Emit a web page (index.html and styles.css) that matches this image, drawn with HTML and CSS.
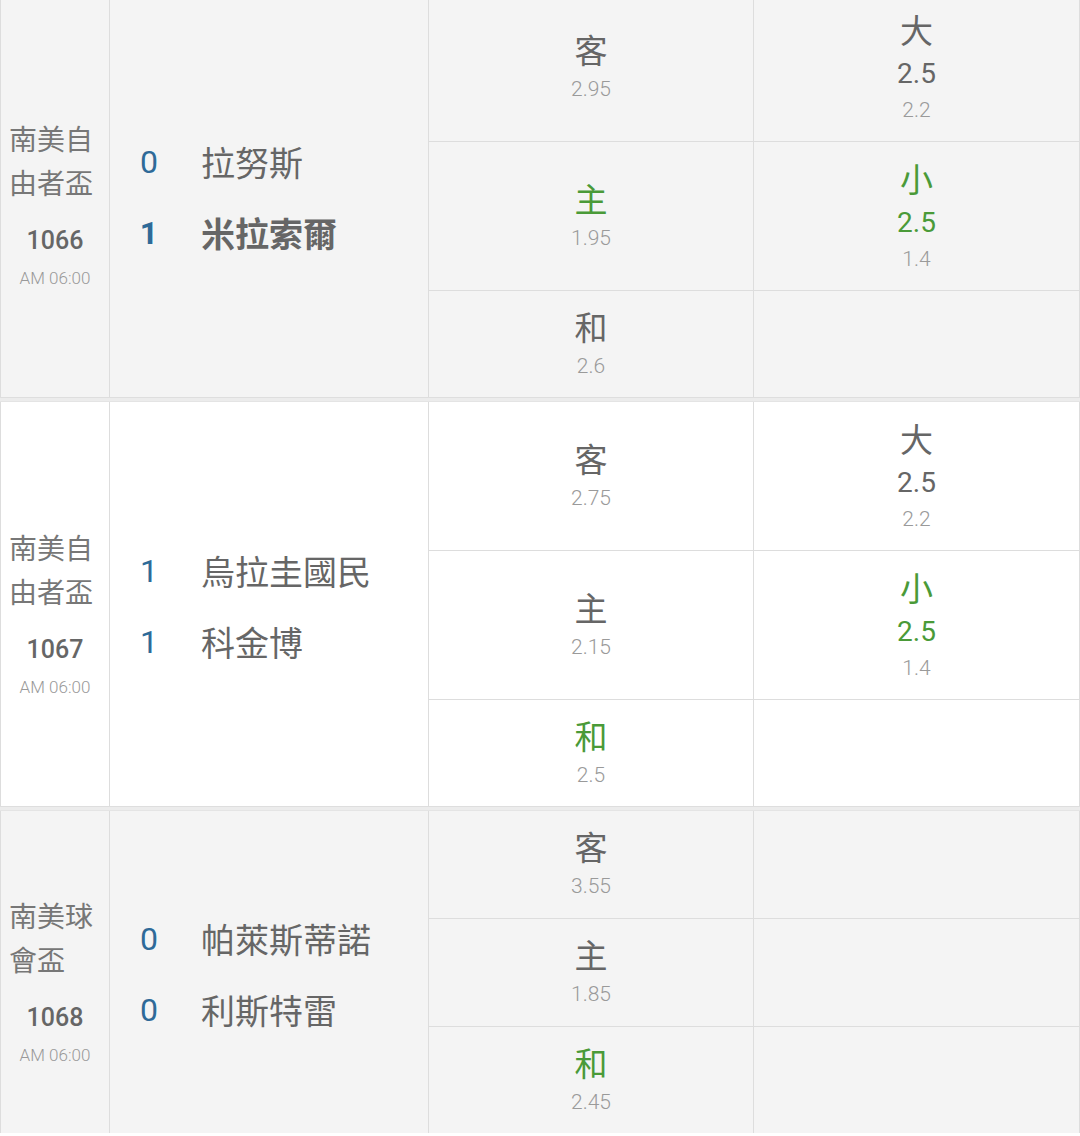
FILE: index.html
```html
<!DOCTYPE html>
<html lang="zh-Hant">
<head>
<meta charset="utf-8">
<title>賽果</title>
<link rel="stylesheet" href="styles.css">
</head>
<body>
<div class="list">
  <div class="match gray">
    <div class="league"><div class="lname">南美自由者盃</div><div class="num">1066</div><div class="time">AM 06:00</div></div>
    <div class="teams">
      <div class="team"><span class="score">0</span><span class="tname">拉努斯</span></div>
      <div class="team win"><span class="score">1</span><span class="tname">米拉索爾</span></div>
    </div>
    <div class="odd"><div class="lbl">客</div><div class="val">2.95</div></div>
    <div class="odd ou"><div class="lbl">大</div><div class="line">2.5</div><div class="val small">2.2</div></div>
    <div class="odd"><div class="lbl green">主</div><div class="val">1.95</div></div>
    <div class="odd ou"><div class="lbl green">小</div><div class="line green">2.5</div><div class="val small">1.4</div></div>
    <div class="odd last"><div class="lbl">和</div><div class="val">2.6</div></div>
    <div class="odd last empty"></div>
  </div>
  <div class="sep"></div>
  <div class="match white">
    <div class="league"><div class="lname">南美自由者盃</div><div class="num">1067</div><div class="time">AM 06:00</div></div>
    <div class="teams">
      <div class="team"><span class="score">1</span><span class="tname">烏拉圭國民</span></div>
      <div class="team"><span class="score">1</span><span class="tname">科金博</span></div>
    </div>
    <div class="odd"><div class="lbl">客</div><div class="val">2.75</div></div>
    <div class="odd ou"><div class="lbl">大</div><div class="line">2.5</div><div class="val small">2.2</div></div>
    <div class="odd"><div class="lbl">主</div><div class="val">2.15</div></div>
    <div class="odd ou"><div class="lbl green">小</div><div class="line green">2.5</div><div class="val small">1.4</div></div>
    <div class="odd last"><div class="lbl green">和</div><div class="val">2.5</div></div>
    <div class="odd last empty"></div>
  </div>
  <div class="sep"></div>
  <div class="match gray">
    <div class="league"><div class="lname">南美球會盃</div><div class="num">1068</div><div class="time">AM 06:00</div></div>
    <div class="teams">
      <div class="team"><span class="score">0</span><span class="tname">帕萊斯蒂諾</span></div>
      <div class="team"><span class="score">0</span><span class="tname">利斯特雷</span></div>
    </div>
    <div class="odd"><div class="lbl">客</div><div class="val">3.55</div></div>
    <div class="odd empty"></div>
    <div class="odd"><div class="lbl">主</div><div class="val">1.85</div></div>
    <div class="odd empty"></div>
    <div class="odd last"><div class="lbl green">和</div><div class="val">2.45</div></div>
    <div class="odd last empty"></div>
  </div>
</div>
</body>
</html>
```
FILE: styles.css
```css
* { box-sizing: border-box; }
html, body { margin: 0; padding: 0; }
body {
  background: #ffffff;
  font-family: Roboto, "Liberation Sans", "Noto Sans CJK TC", sans-serif;
  color: #666666;
  overflow: hidden;
}
.list { margin-top: -7px; }
.match {
  display: grid;
  grid-template-columns: 110px 319px 325px 1fr;
}
.match.gray { background: #f4f4f4; }
.match.white { background: #ffffff; }
.sep {
  height: 5px;
  background: #ececec;
  border-top: 1px solid #dedede;
  border-bottom: 1px solid #e4e4e4;
}
.league {
  grid-row: 1 / 4;
  grid-column: 1;
  border-left: 1px solid #dddddd;
  border-right: 1px solid #dddddd;
  display: flex;
  flex-direction: column;
  justify-content: center;
  padding: 20px 12px 0 8px;
}
.lname {
  font-size: 28px;
  line-height: 44px;
  color: #777777;
  font-family: "Noto Sans CJK TC", sans-serif;
}
.num {
  margin-top: 17px;
  font-size: 25px;
  line-height: 40px;
  font-weight: 500;
  color: #666666;
  text-align: center;
  margin-left: -8px;
  margin-right: -12px;
}
.time {
  font-size: 17px;
  line-height: 34px;
  font-weight: 300;
  color: #999999;
  text-align: center;
  margin-left: -8px;
  margin-right: -12px;
}
.teams {
  grid-row: 1 / 4;
  grid-column: 2;
  border-right: 1px solid #dddddd;
  display: flex;
  flex-direction: column;
  justify-content: center;
  gap: 21px;
  padding-left: 19px;
  padding-top: 4px;
}
.team {
  display: flex;
  align-items: center;
  height: 50px;
}
.score {
  width: 40px;
  text-align: center;
  font-size: 32px;
  font-weight: 400;
  color: #2e6a98;
}
.tname {
  margin-left: 32px;
  font-size: 34px;
  color: #666666;
  font-family: "Noto Sans CJK TC", sans-serif;
}
.team.win .score { font-weight: 700; }
.team.win .tname { font-weight: 700; }
.odd {
  border-right: 1px solid #dddddd;
  border-bottom: 1px solid #dddddd;
  display: flex;
  flex-direction: column;
  justify-content: center;
  align-items: center;
  padding: 13px 0 14px;
}
.odd.last { border-bottom: none; padding: 13px 0 13px; }
.odd.ou { padding: 13px 0 17px; }
.lbl {
  font-size: 33px;
  line-height: 44px;
  color: #666666;
  font-family: "Noto Sans CJK TC", sans-serif;
}
.ou .lbl { line-height: 46px; }
.line {
  font-size: 28px;
  line-height: 44px;
  color: #666666;
}
.val {
  font-size: 21px;
  line-height: 36px;
  font-weight: 300;
  color: #9a9a9a;
}
.val.small { line-height: 28px; }
.green { color: #4a9a38; }
```
